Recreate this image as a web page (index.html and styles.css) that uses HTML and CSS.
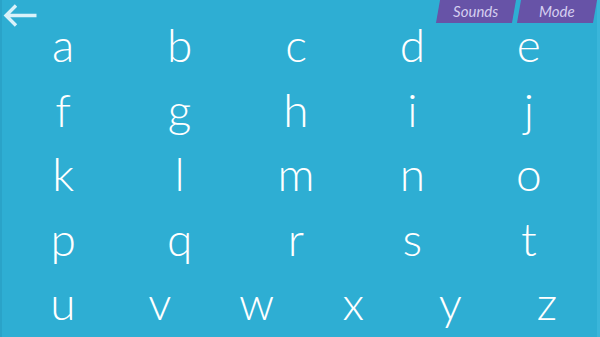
FILE: index.html
```html
<!DOCTYPE html>
<html>
<head>
<meta charset="utf-8">
<link rel="stylesheet" href="styles.css">
</head>
<body>
<div class="screen">
  <header class="topbar">
    <a class="back" aria-label="Back">
      <svg width="36" height="26" viewBox="0 0 36 26">
        <path d="M34.5 12.5 H4 M14 2.5 L4 12.5 L14 22.5" fill="none" stroke="#d9f2fa" stroke-width="3.4" stroke-linecap="butt" stroke-linejoin="miter"/>
      </svg>
    </a>
    <nav class="tabs">
      <div class="tab"><span>Sounds</span></div>
      <div class="tab"><span>Mode</span></div>
    </nav>
  </header>
  <main class="letters">
    <div class="row five">
      <span>a</span><span>b</span><span>c</span><span>d</span><span>e</span>
    </div>
    <div class="row five">
      <span>f</span><span>g</span><span>h</span><span>i</span><span>j</span>
    </div>
    <div class="row five">
      <span>k</span><span>l</span><span>m</span><span>n</span><span>o</span>
    </div>
    <div class="row five">
      <span>p</span><span>q</span><span>r</span><span>s</span><span>t</span>
    </div>
    <div class="row six">
      <span>u</span><span>v</span><span>w</span><span>x</span><span>y</span><span>z</span>
    </div>
  </main>
</div>
</body>
</html>
```

FILE: styles.css
```css
html, body {
  margin: 0;
  padding: 0;
}
body {
  width: 600px;
  height: 337px;
  overflow: hidden;
  background: #2eaed3;
}
.screen {
  width: 600px;
  height: 337px;
  box-sizing: border-box;
  border-left: 2px solid #2aa3c8;
  border-right: 3px solid #3ab6da;
  display: flex;
  flex-direction: column;
  overflow: hidden;
}
.topbar {
  height: 13px;
  display: flex;
  justify-content: space-between;
  align-items: flex-start;
  flex-shrink: 0;
}
.back {
  display: block;
  margin-top: 3px;
  height: 26px;
}
.back svg {
  display: block;
}
.tabs {
  display: flex;
  gap: 5px;
  margin-right: 2px;
}
.tab {
  width: 76px;
  height: 23px;
  background: #6753a7;
  transform: skewX(-10deg);
  display: flex;
  align-items: center;
  justify-content: center;
}
.tab span {
  transform: skewX(10deg);
  font-family: "Lato", "DejaVu Sans", sans-serif;
  font-style: italic;
  font-weight: 400;
  font-size: 15px;
  color: #d6cff0;
  margin-top: -1px;
}
.letters {
  display: flex;
  flex-direction: column;
  font-family: "Lato", "DejaVu Sans", sans-serif;
  font-weight: 300;
  font-size: 46px;
  line-height: 64.6px;
  color: #ffffff;
}
.row {
  display: grid;
  height: 64.6px;
}
.row.five {
  grid-template-columns: repeat(5, 116.4px);
  padding-left: 3px;
}
.row.six {
  grid-template-columns: repeat(6, 96.8px);
  padding-left: 12.6px;
}
.row span {
  text-align: center;
}
```
